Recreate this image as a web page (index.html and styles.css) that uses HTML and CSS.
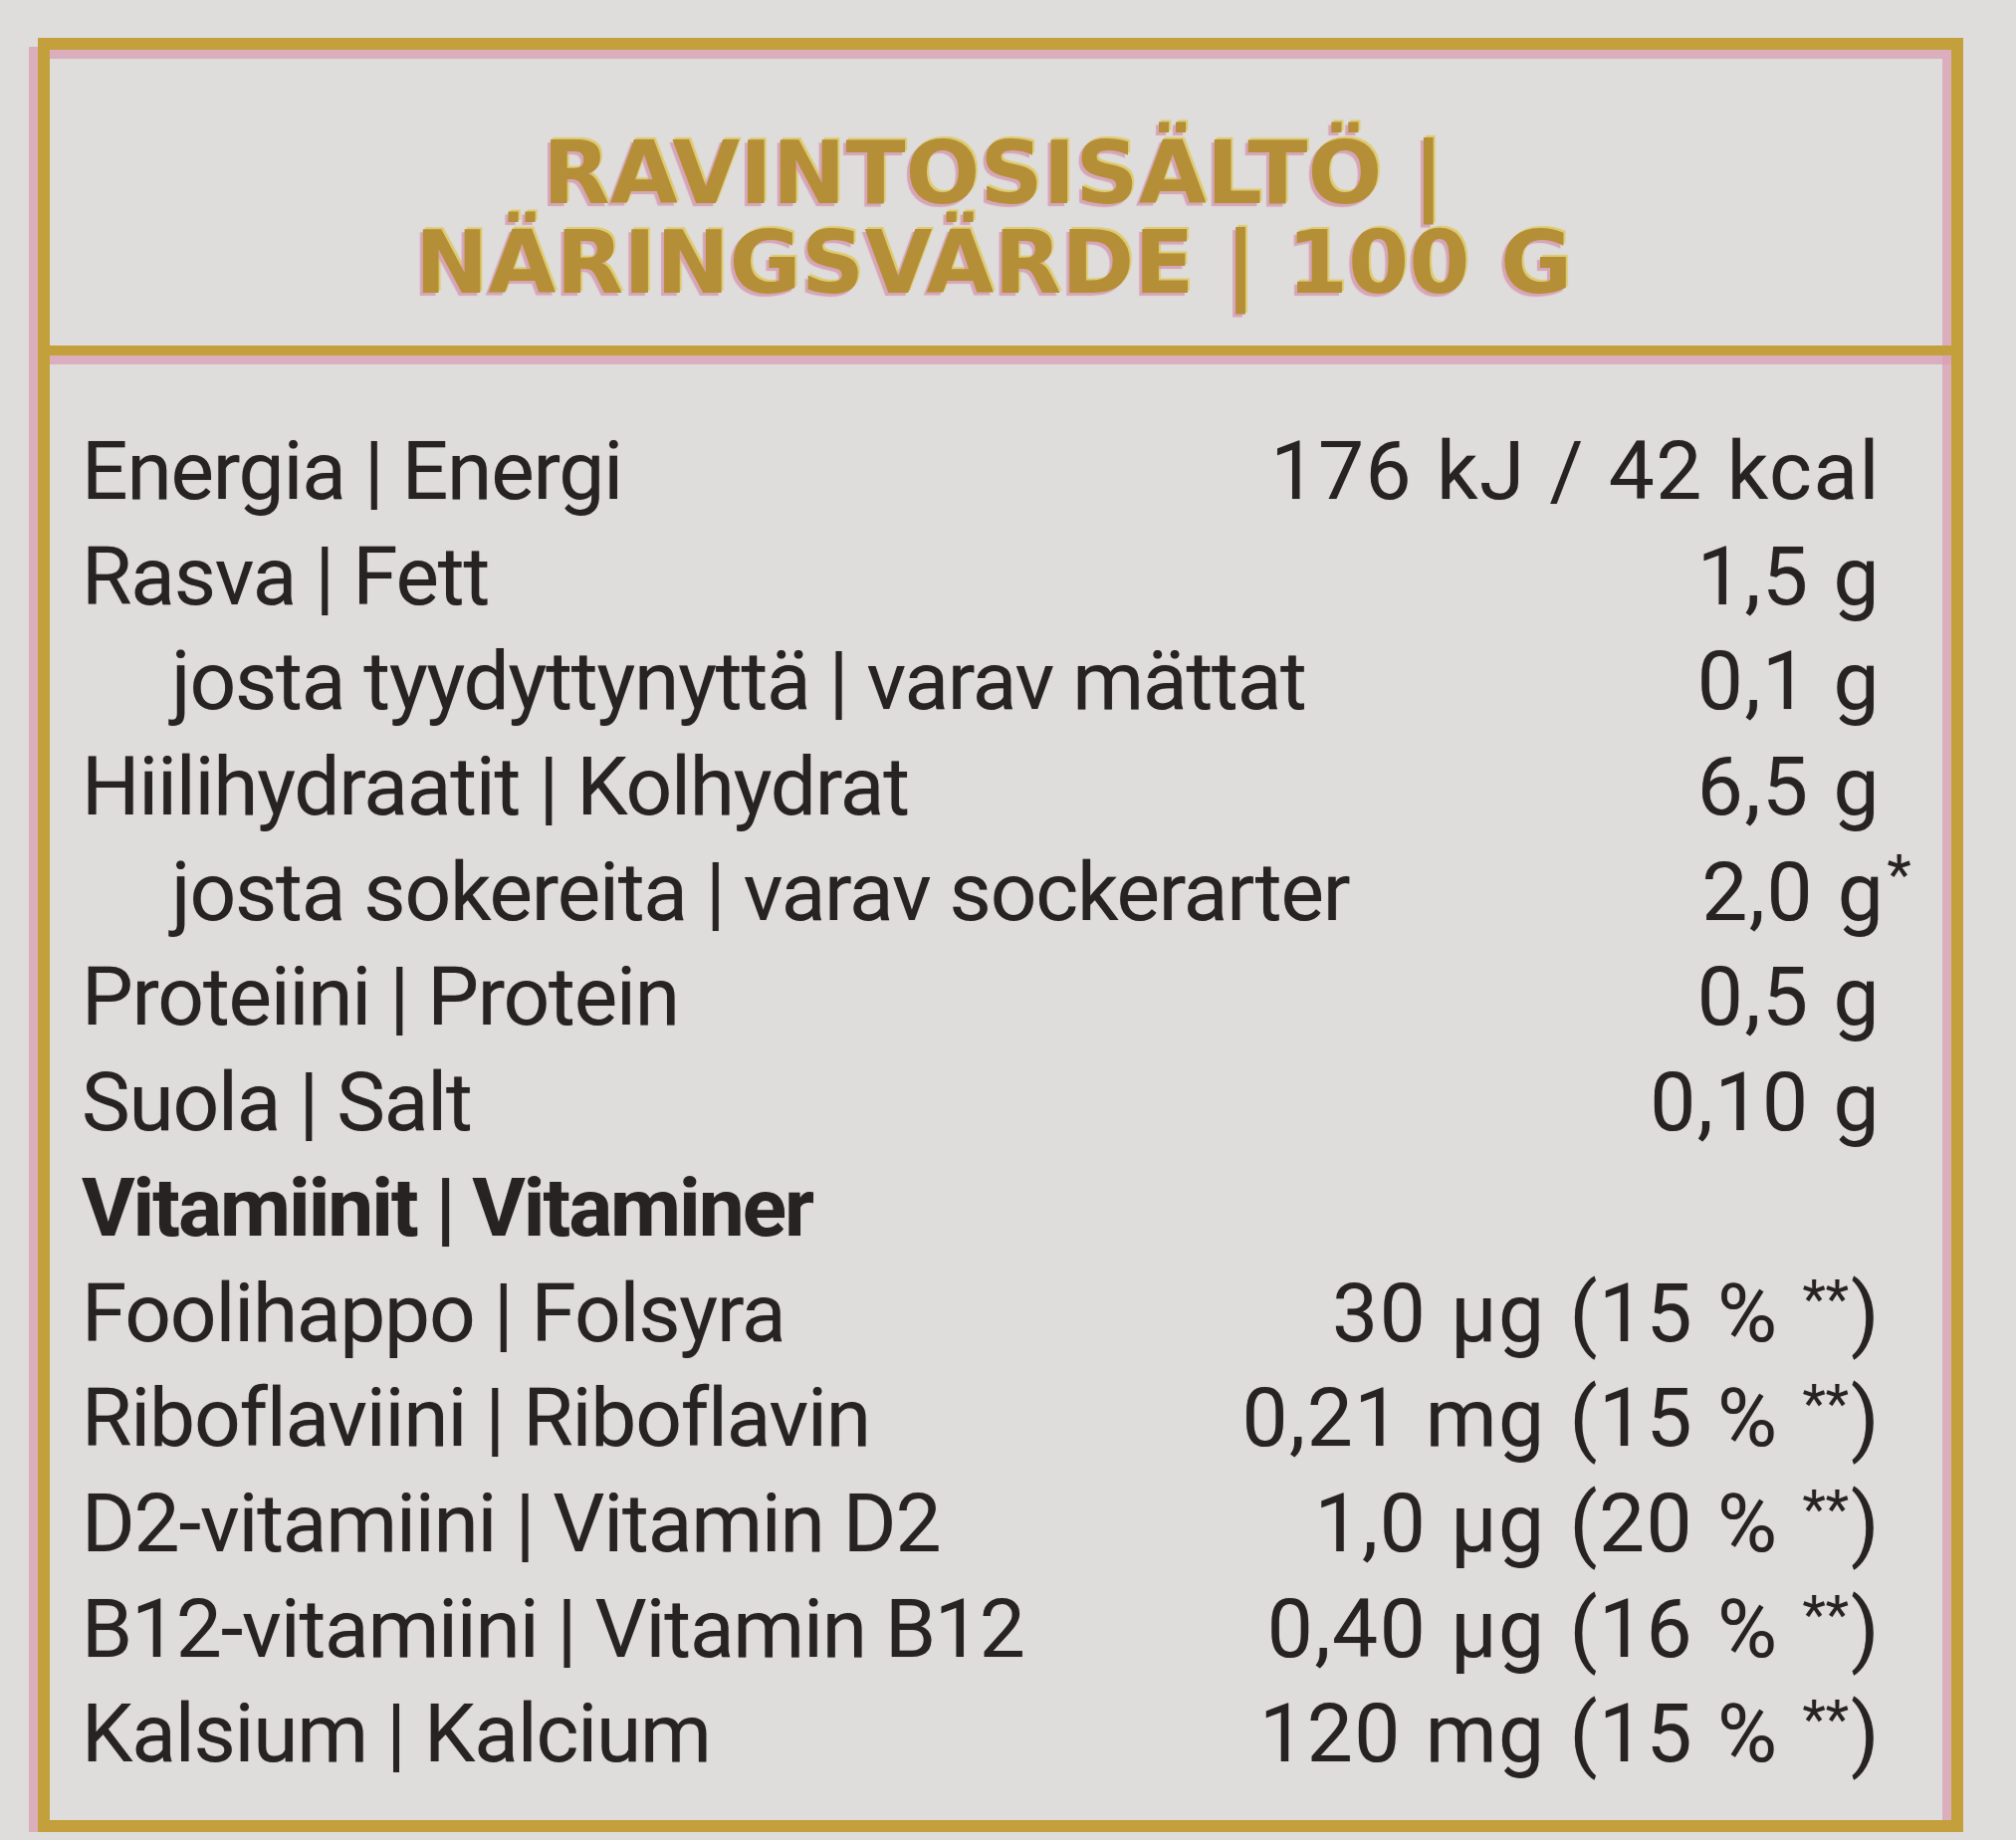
FILE: index.html
```html
<!DOCTYPE html>
<html lang="fi">
<head>
<meta charset="utf-8">
<title>Ravintosisältö | Näringsvärde</title>
<link rel="stylesheet" href="styles.css">
</head>
<body>
<div class="label">
  <header class="label-head">
    <h1 class="title"><span class="title-line">RAVINTOSISÄLTÖ |</span><span class="title-line">NÄRINGSVÄRDE | 100 G</span></h1>
  </header>
  <section class="facts">
    <div class="row"><span class="name">Energia | Energi</span><span class="val">176 kJ / 42 kcal</span></div>
    <div class="row"><span class="name">Rasva | Fett</span><span class="val">1,5 g</span></div>
    <div class="row sub"><span class="name">josta tyydyttynyttä | varav mättat</span><span class="val">0,1 g</span></div>
    <div class="row"><span class="name">Hiilihydraatit | Kolhydrat</span><span class="val">6,5 g</span></div>
    <div class="row sub"><span class="name">josta sokereita | varav sockerarter</span><span class="val">2,0 g<sup class="mark">*</sup></span></div>
    <div class="row"><span class="name">Proteiini | Protein</span><span class="val">0,5 g</span></div>
    <div class="row"><span class="name">Suola | Salt</span><span class="val">0,10 g</span></div>
    <div class="row group"><span class="name">Vitamiinit | Vitaminer</span></div>
    <div class="row"><span class="name">Foolihappo | Folsyra</span><span class="val">30 µg (15 % <sup class="stars">**</sup>)</span></div>
    <div class="row"><span class="name">Riboflaviini | Riboflavin</span><span class="val">0,21 mg (15 % <sup class="stars">**</sup>)</span></div>
    <div class="row"><span class="name">D2-vitamiini | Vitamin D2</span><span class="val">1,0 µg (20 % <sup class="stars">**</sup>)</span></div>
    <div class="row"><span class="name">B12-vitamiini | Vitamin B12</span><span class="val">0,40 µg (16 % <sup class="stars">**</sup>)</span></div>
    <div class="row"><span class="name">Kalsium | Kalcium</span><span class="val">120 mg (15 % <sup class="stars">**</sup>)</span></div>
  </section>
</div>
</body>
</html>
```
FILE: styles.css
```css
html, body {
  margin: 0;
  padding: 0;
  background: #dedddb;
}

body {
  padding: 38px 0 0 38px;
  font-family: Roboto, "Liberation Sans", sans-serif;
}

.label {
  width: 1934px;
  box-sizing: border-box;
  border: 12px solid #c4a03c;
  box-shadow: -9px 9px 0 0 rgba(218, 158, 180, 0.75),
              inset -9px 9px 0 0 rgba(218, 158, 180, 0.75);
  display: flex;
  flex-direction: column;
}

.label-head {
  padding: 79px 14px 38px 0;
  border-bottom: 10px solid #c4a03c;
  box-shadow: 0 9px 0 0 rgba(218, 158, 180, 0.75);
  text-align: center;
}

.title {
  margin: 0;
  font-family: "DejaVu Sans", "Liberation Sans", sans-serif;
  font-weight: 700;
  font-size: 88px;
  line-height: 90px;
  color: #b58f38;
  text-shadow: -3px 3px 1px rgba(214, 150, 175, 0.8),
               2px -2px 1px rgba(222, 196, 70, 0.75);
}

.title-line {
  display: block;
}

.facts {
  padding: 64px 71px 33px 32px;
  color: #272323;
  text-shadow: 0 0 1px rgba(30, 25, 25, 0.35);
}

.row {
  display: flex;
  justify-content: space-between;
  align-items: baseline;
  font-size: 82px;
  line-height: 105.7px;
  height: 105.7px;
  white-space: nowrap;
}

.name {
  letter-spacing: -1.2px;
}

.sub .name {
  padding-left: 90px;
}

.group .name {
  font-weight: 700;
  letter-spacing: -2px;
}

.val {
  letter-spacing: 1.5px;
  word-spacing: 2px;
}

.mark {
  font-size: 56px;
  line-height: 0;
  vertical-align: 26px;
  margin-right: -32px;
  margin-left: 2px;
}

.stars {
  font-size: 54px;
  line-height: 0;
  vertical-align: 24px;
  letter-spacing: 0;
  margin-right: 2px;
}
```
